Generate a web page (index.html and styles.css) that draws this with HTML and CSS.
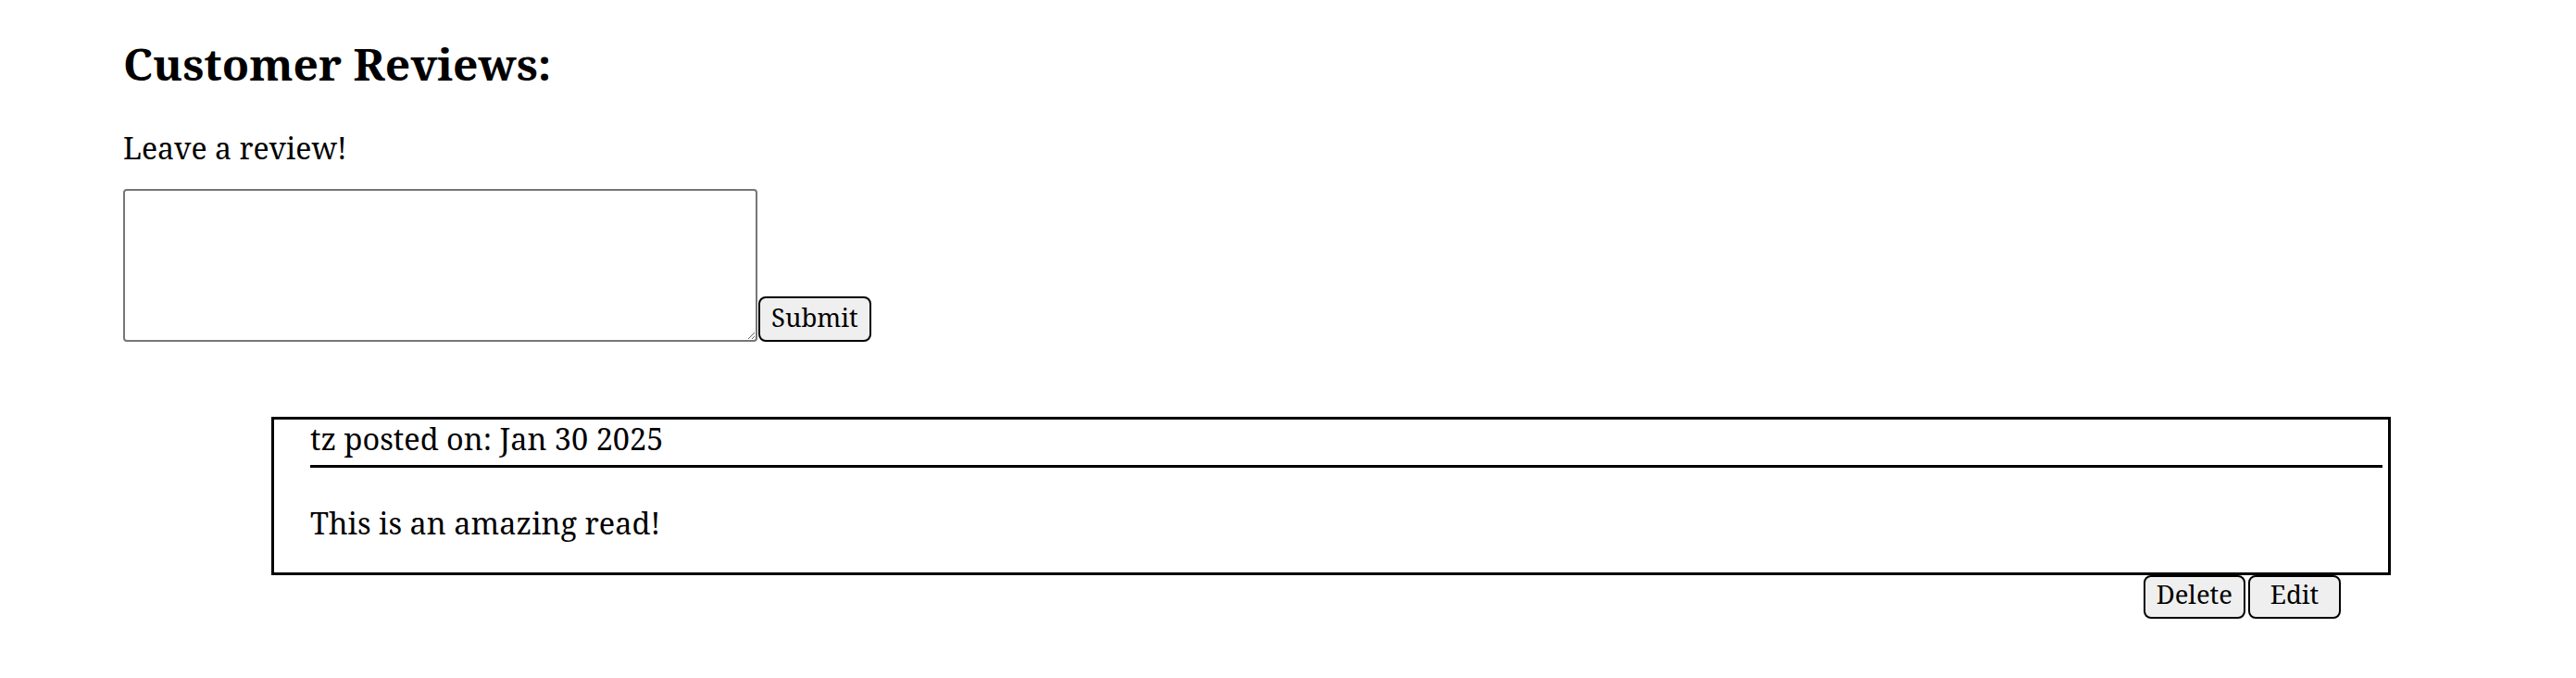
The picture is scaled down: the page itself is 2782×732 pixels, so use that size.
FILE: index.html
```html
<!DOCTYPE html>
<html lang="en">
<head>
<meta charset="utf-8">
<title>Customer Reviews</title>
<link rel="stylesheet" href="styles.css">
</head>
<body>
<main class="page">
  <h2 class="title">Customer Reviews:</h2>
  <p class="prompt">Leave a review!</p>
  <form class="review-form">
    <textarea class="review-input"></textarea><button type="button" class="btn submit">Submit</button>
  </form>
  <section class="reviews">
    <article class="review-card">
      <div class="review-meta">tz posted on: Jan 30 2025</div>
      <hr class="divider">
      <p class="review-text">This is an amazing read!</p>
    </article>
    <div class="review-actions">
      <button type="button" class="btn">Delete</button><button type="button" class="btn edit">Edit</button>
    </div>
  </section>
</main>
</body>
</html>
```
FILE: styles.css
```css
html, body {
  margin: 0;
  padding: 0;
  background: #fff;
}
body {
  font-family: "Noto Serif", serif;
  color: #000;
}
.page {
  padding: 39px 0 40px 133px;
}
.title {
  margin: 0;
  font-size: 48px;
  line-height: 60px;
  font-weight: 700;
}
.prompt {
  margin: 41px 0 0;
  font-size: 32px;
  line-height: 40px;
}
.review-form {
  margin: 24px 0 0;
  display: flex;
  align-items: flex-end;
}
.review-input {
  box-sizing: border-box;
  width: 685px;
  height: 165px;
  margin: 0;
  padding: 4px;
  border: 2px solid #767676;
  border-radius: 4px;
  background: #fff;
  font-family: "Noto Serif", serif;
  font-size: 26px;
}
.btn {
  box-sizing: border-box;
  display: inline-flex;
  align-items: center;
  justify-content: center;
  margin: 0;
  padding: 0 12px 5px;
  border: 2px solid #000;
  border-radius: 8px;
  background: #efefef;
  color: #000;
  font-family: "Noto Serif", serif;
  font-size: 27.5px;
  line-height: 36px;
  height: 47px;
}
.submit {
  margin-left: 1px;
  height: 49px;
  padding: 0 12px 4px;
}
.edit {
  min-width: 100px;
  margin-left: 3px;
}
.reviews {
  margin: 81px 200px 0 160px;
}
.review-card {
  border: 3px solid #000;
  padding: 1px 6px 33px 39px;
}
.review-meta {
  font-size: 32.5px;
  line-height: 40px;
}
.divider {
  margin: 8px 0 0;
  height: 0;
  border: none;
  border-top: 3px solid #000;
}
.review-text {
  margin: 40px 0 0;
  font-size: 32.5px;
  line-height: 40px;
}
.review-actions {
  display: flex;
  justify-content: flex-end;
  padding-right: 54px;
}
```
